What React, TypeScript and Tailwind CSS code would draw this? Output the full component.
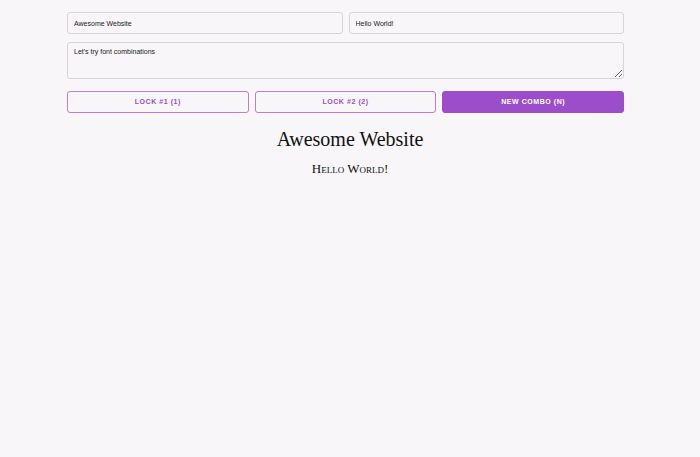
import React from "react";

export default function App() {
  return (
    <div className="min-h-[457px] w-full bg-[#f8f6f9]" style={{ fontFamily: '"Liberation Sans", Arial, sans-serif' }}>
      <div className="ml-[67px] w-[557px] pt-3">
        <div className="flex gap-[6px]">
          <input
            defaultValue="Awesome Website"
            className="h-[22px] flex-1 min-w-0 rounded-[3px] border border-[#d6d6d6] bg-transparent px-[6px] text-[7px] text-[#222] outline-none"
          />
          <input
            defaultValue="Hello World!"
            className="h-[22px] flex-1 min-w-0 rounded-[3px] border border-[#d6d6d6] bg-transparent px-[6px] text-[7px] text-[#222] outline-none"
          />
        </div>
        <textarea
          defaultValue="Let's try font combinations"
          className="mt-[8px] block h-[37px] w-full rounded-[3px] border border-[#d6d6d6] bg-transparent px-[6px] py-[4px] text-[7px] text-[#222] outline-none"
        />
        <div className="mt-[12px] flex gap-[6px]">
          <button className="h-[22px] flex-1 rounded-[3px] border border-[#b580d6] bg-transparent text-[7px] font-bold uppercase tracking-[0.08em] text-[#9b4dca]">
            Lock #1 (1)
          </button>
          <button className="h-[22px] flex-1 rounded-[3px] border border-[#b580d6] bg-transparent text-[7px] font-bold uppercase tracking-[0.08em] text-[#9b4dca]">
            Lock #2 (2)
          </button>
          <button className="h-[22px] flex-1 rounded-[3px] border border-[#9b4dca] bg-[#9b4dca] text-[7px] font-bold uppercase tracking-[0.08em] text-white">
            New combo (N)
          </button>
        </div>
      </div>
      <h1
        className="mt-[14px] text-center text-[20px] leading-[24px] text-[#111]"
        style={{ fontFamily: '"Liberation Serif", "Times New Roman", serif' }}
      >
        Awesome Website
      </h1>
      <h2
        className="mt-[10px] text-center text-[13px] leading-[16px] text-[#111] [font-variant:small-caps]"
        style={{ fontFamily: '"Liberation Serif", "Times New Roman", serif' }}
      >
        Hello World!
      </h2>
    </div>
  );
}
